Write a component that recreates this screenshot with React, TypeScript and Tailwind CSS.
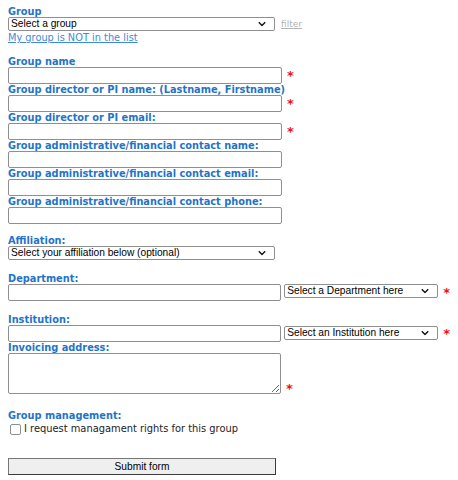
import { ReactNode } from 'react'

const labelCls = "block font-['DejaVu_Sans',sans-serif] font-bold text-[9.8px] leading-[11px] h-[11px] text-[#1f74c8] whitespace-nowrap"
const inputCls = 'block w-[274px] h-[17px] border border-[#8f8f8f] rounded-[2px] bg-white px-1 text-[10px]'
const selectText = "font-['Liberation_Sans',Arial,sans-serif] text-[10.2px] text-black"

const Star = () => (
  <span className="ml-[5px] font-['DejaVu_Sans',sans-serif] font-bold text-[13px] leading-none text-[#ee1111]">*</span>
)

const Chevron = () => (
  <svg width="8" height="5" viewBox="0 0 8 5" className="pointer-events-none absolute right-[9px] top-1/2 -translate-y-1/2">
    <path d="M0.8 0.8 L4 4 L7.2 0.8" fill="none" stroke="#111" strokeWidth="1.4" />
  </svg>
)

const Select = ({ text, width }: { text: string; width: string }) => (
  <span className={`relative block shrink-0 ${width}`}>
    <select
      defaultValue=""
      className={`block w-full h-[14px] appearance-none border border-[#8f8f8f] rounded-[2px] bg-white pl-[2px] pr-4 leading-[12px] ${selectText}`}
    >
      <option value="">{text}</option>
    </select>
    <Chevron />
  </span>
)

const Field = ({ label, required, children }: { label: string; required?: boolean; children?: ReactNode }) => (
  <div>
    <label className={labelCls}>{label}</label>
    <div className="flex items-center">
      {children ?? <input type="text" className={inputCls} />}
      {required && <Star />}
    </div>
  </div>
)

const App = (): JSX.Element => {
  return (
    <main className="w-[458px] h-[480px] bg-white px-2 pt-[6px] overflow-hidden">
      <form autoComplete="off" onSubmit={(e) => e.preventDefault()}>
        {/* group picker */}
        <label className={labelCls}>Group</label>
        <div className="flex items-center">
          <Select text="Select a group" width="w-[267px]" />
          <a href="#" className="ml-[6px] font-['DejaVu_Sans',sans-serif] text-[9px] leading-[11px] text-[#b4b4b4] underline">
            filter
          </a>
        </div>
        <a
          href="#"
          className="block mt-[1px] font-['DejaVu_Sans',sans-serif] text-[9.8px] leading-[11px] h-[11px] text-[#3d8bd6] underline"
        >
          My group is NOT in the list
        </a>

        <div className="mt-[13px]">
          <Field label="Group name" required />
          <Field label="Group director or PI name: (Lastname, Firstname)" required />
          <Field label="Group director or PI email:" required />
          <Field label="Group administrative/financial contact name:" />
          <Field label="Group administrative/financial contact email:" />
          <Field label="Group administrative/financial contact phone:" />
        </div>

        <div className="mt-[11px]">
          <label className={labelCls}>Affiliation:</label>
          <Select text="Select your affiliation below (optional)" width="w-[267px]" />
        </div>

        <div className="mt-[13px]">
          <Field label="Department:" required>
            <input type="text" className={inputCls} />
            <span className="ml-[3px] self-start">
              <Select text="Select a Department here" width="w-[154px]" />
            </span>
          </Field>
        </div>

        <div className="mt-[13px]">
          <Field label="Institution:" required>
            <input type="text" className={inputCls} />
            <span className="ml-[3px] self-start mt-[1px]">
              <Select text="Select an Institution here" width="w-[154px]" />
            </span>
          </Field>
        </div>

        <div>
          <label className={labelCls}>Invoicing address:</label>
          <div className="flex items-end">
            <textarea className="block w-[273px] h-[41px] border border-[#8f8f8f] rounded-[2px] bg-white" />
            <span className="mb-[-5px]">
              <Star />
            </span>
          </div>
        </div>

        <div className="mt-[16px]">
          <label className={labelCls}>Group management:</label>
          <label className="flex items-center mt-[2px] h-[12px]">
            <input
              type="checkbox"
              className="ml-[2px] w-[11px] h-[11px] appearance-none border border-[#8f8f8f] rounded-[2px] bg-white"
            />
            <span className="ml-[3px] font-['DejaVu_Sans',sans-serif] text-[9.9px] leading-[12px] text-[#222]">
              I request managament rights for this group
            </span>
          </label>
        </div>

        <button
          type="submit"
          className={`block mt-[23px] w-[268px] h-[17px] border border-[#767676] border-b-[#3b3b3b] border-r-[#3b3b3b] bg-[#efefef] ${selectText}`}
        >
          Submit form
        </button>
      </form>
    </main>
  )
}

export default App
